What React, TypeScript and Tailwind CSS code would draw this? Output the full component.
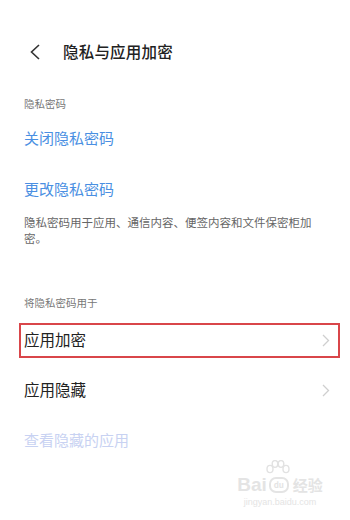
import React from 'react';

const font = { fontFamily: '"Noto Sans CJK SC", "Noto Sans", sans-serif' };

const Chevron: React.FC = () => (
  <svg width="8" height="13" viewBox="0 0 8 13" fill="none">
    <polyline points="1,1 6.5,6.5 1,12" stroke="#cfcfcf" strokeWidth="1.3" />
  </svg>
);

export default function App() {
  return (
    <div className="relative w-[350px] h-[520px] bg-white overflow-hidden" style={font}>
      {/* header */}
      <div className="mt-[40px] h-[24px] flex items-center">
        <div className="w-[63px] pl-[29px] flex items-center">
          <svg width="12" height="16" viewBox="0 0 12 16" fill="none">
            <polyline points="10,1 2.5,8 10,15" stroke="#333" strokeWidth="1.6" />
          </svg>
        </div>
        <span className="text-[15.5px] font-medium text-[#222] tracking-[0.2px]">隐私与应用加密</span>
      </div>

      {/* privacy password */}
      <div className="mt-[32px] h-[16px] px-[24px] flex items-center text-[10.5px] text-[#777]">隐私密码</div>
      <div className="h-[52px] px-[24px] flex items-center text-[15px] text-[#4a8fe2]">关闭隐私密码</div>
      <div className="h-[50px] px-[24px] flex items-center text-[15px] text-[#4a8fe2]">更改隐私密码</div>
      <p className="pl-[24px] pr-[36px] text-[11.5px] leading-[16px] text-[#666]">
        隐私密码用于应用、通信内容、便签内容和文件保密柜加密。
      </p>

      {/* used for */}
      <div className="mt-[49px] h-[16px] px-[24px] flex items-center text-[10.5px] text-[#777]">将隐私密码用于</div>
      <div className="mt-[4px] h-[50px] flex items-center">
        <div className="ml-[19px] mr-[10px] flex-1 h-[35px] border-2 border-[#d9464a] pl-[3px] pr-[8px] flex items-center justify-between">
          <span className="text-[15.5px] text-[#222]">应用加密</span>
          <Chevron />
        </div>
      </div>
      <div className="h-[50px] pl-[24px] pr-[20px] flex items-center justify-between">
        <span className="text-[15.5px] text-[#222]">应用隐藏</span>
        <Chevron />
      </div>
      <div className="h-[50px] px-[24px] flex items-center text-[15px] text-[#c8d2f2]">查看隐藏的应用</div>

      {/* watermark */}
      <div className="absolute left-[234px] top-[460px] w-[92px] flex flex-col items-center text-[#e4e4e4]">
        <svg width="26" height="20" viewBox="0 0 26 20" fill="none" stroke="#e2e2e2" strokeWidth="1.4" className="ml-[-4px]">
          <ellipse cx="5" cy="9" rx="3" ry="3.6" />
          <ellipse cx="10" cy="4" rx="2.8" ry="3.4" />
          <ellipse cx="16" cy="4" rx="2.8" ry="3.4" />
          <ellipse cx="21" cy="9" rx="3" ry="3.6" />
        </svg>
        <div className="flex items-center gap-[2px] mt-[-4px]">
          <span className="text-[19px] leading-[18px] font-bold" style={{ fontFamily: '"Liberation Sans", sans-serif' }}>Bai</span>
          <span className="w-[20px] h-[16px] rounded-[7px] border-2 border-[#e4e4e4] text-[8px] leading-[10px] flex items-center justify-center font-bold">du</span>
          <span className="text-[15px] leading-[18px] font-bold ml-[2px]">经验</span>
        </div>
        <div className="text-[9px] leading-[12px] mt-[2px]" style={{ fontFamily: '"Liberation Sans", sans-serif' }}>jingyan.baidu.com</div>
      </div>
    </div>
  );
}
